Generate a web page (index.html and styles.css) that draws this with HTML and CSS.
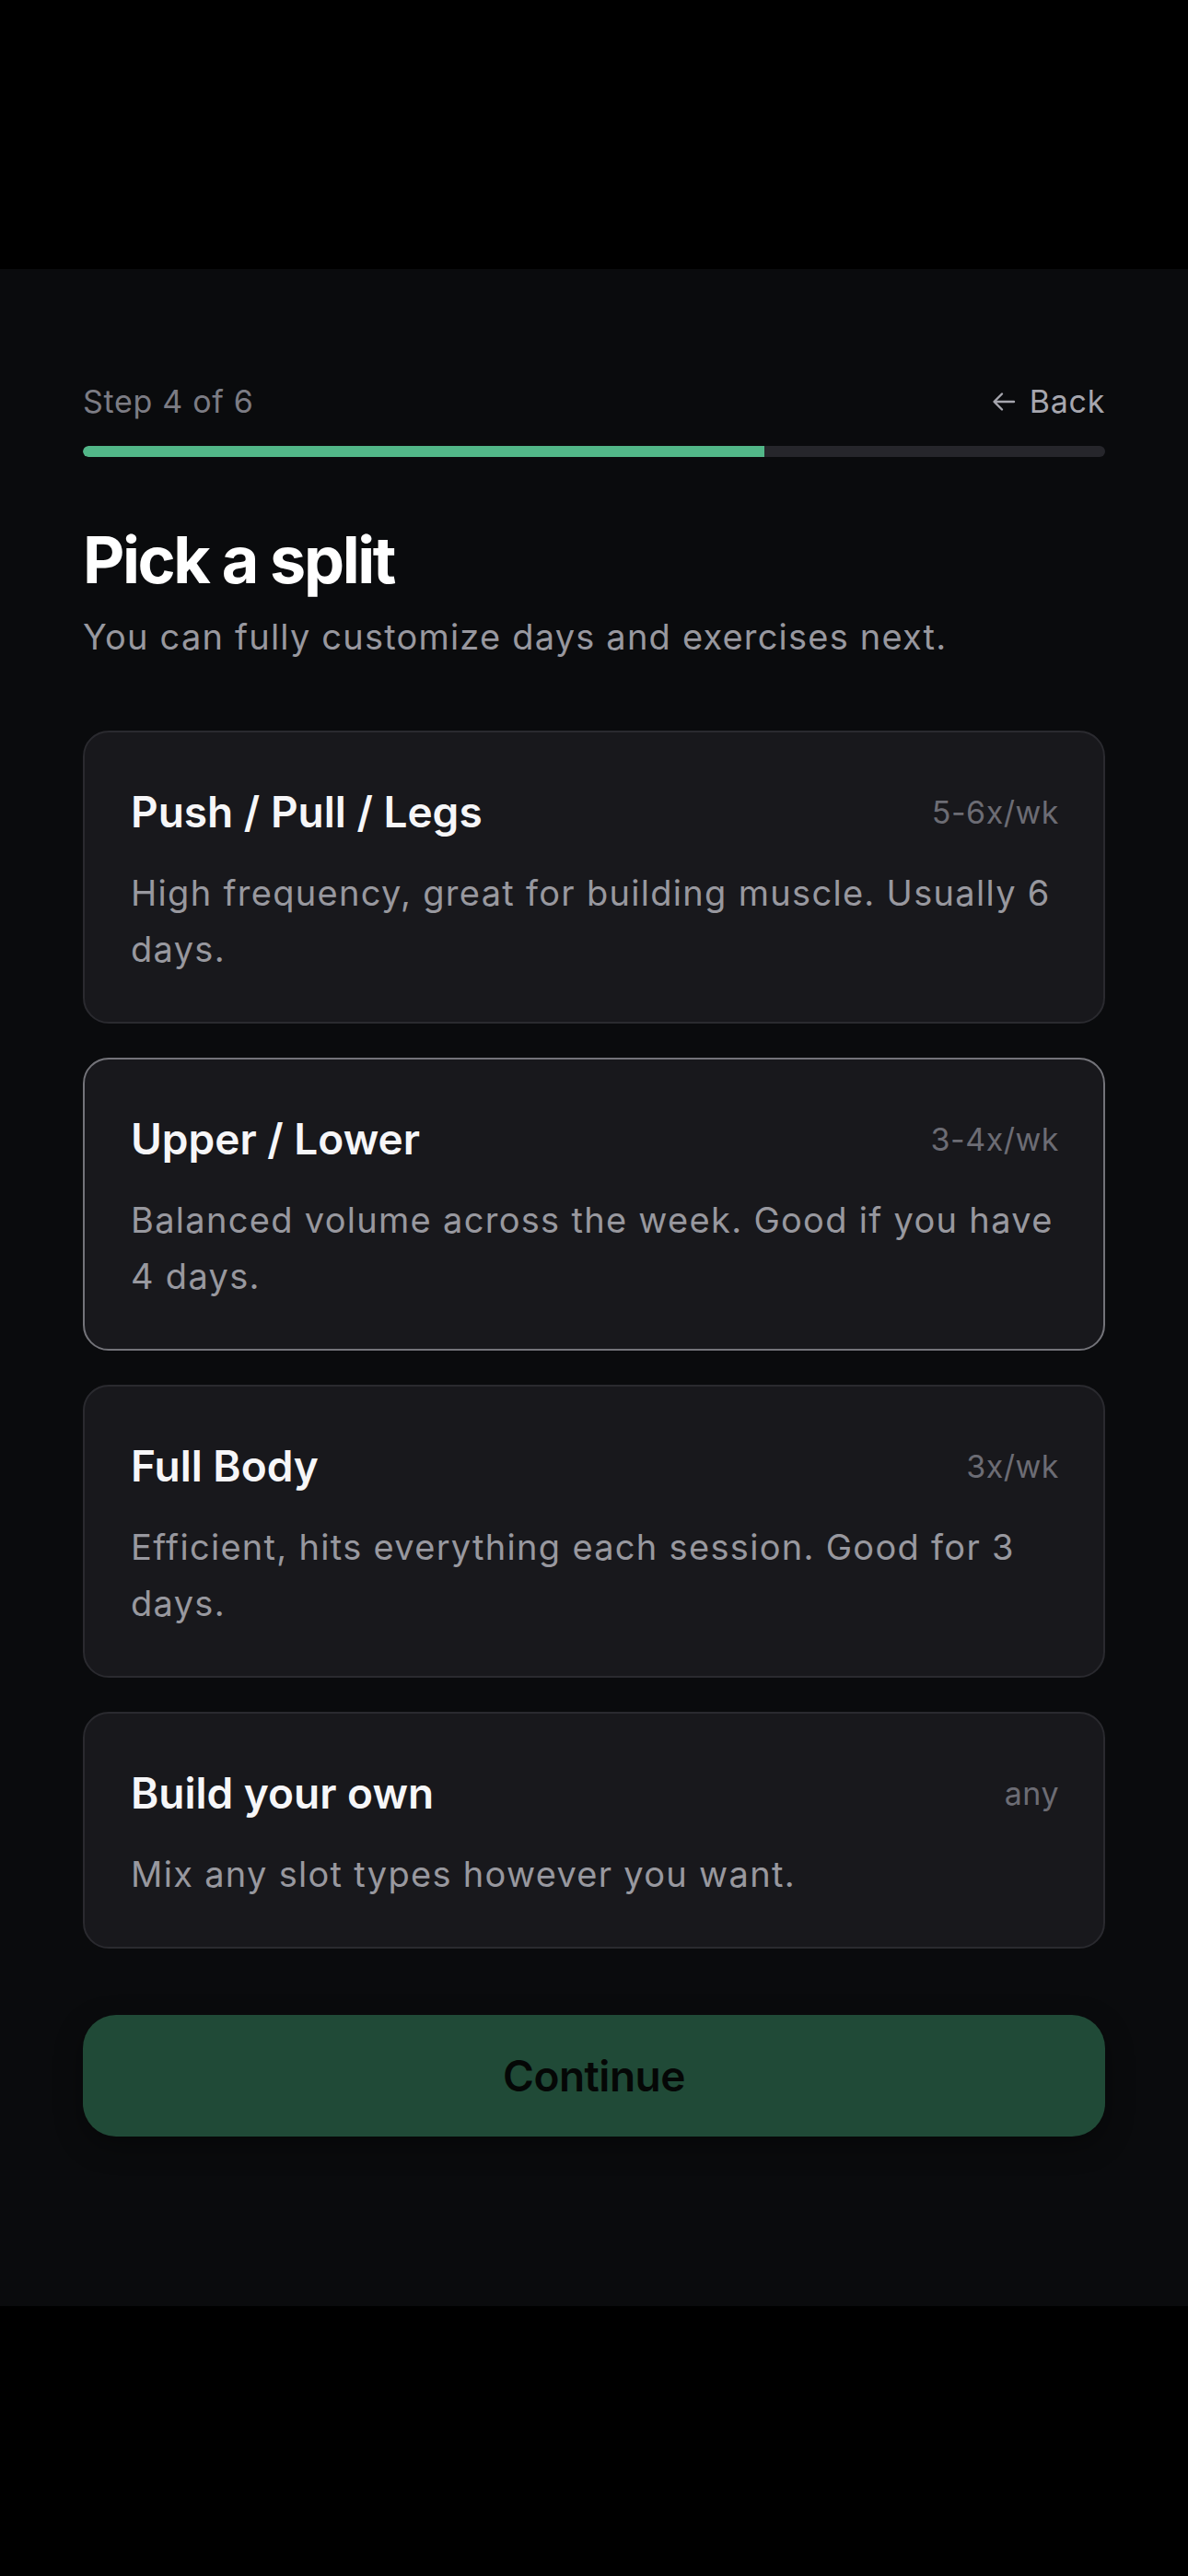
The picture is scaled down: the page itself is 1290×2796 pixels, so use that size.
FILE: index.html
```html
<!DOCTYPE html>
<html lang="en">
<head>
  <meta charset="UTF-8" />
  <meta name="viewport" content="width=device-width, initial-scale=1" />
  <title>Pick a split</title>
  <link rel="stylesheet" href="styles.css">
</head>
<body>
  <div class="screen">
    <div class="topbar">
      <span class="step">Step 4 of 6</span>
      <a class="back" href="#">
        <svg class="back-icon" viewBox="0 0 26 22" width="26" height="22" aria-hidden="true">
          <path d="M24 11H3M11 2.5L2.5 11L11 19.5" fill="none" stroke="currentColor" stroke-width="2.4" stroke-linecap="round" stroke-linejoin="round"/>
        </svg>
        Back
      </a>
    </div>
    <div class="progress"><div class="progress-fill"></div></div>

    <h1>Pick a split</h1>
    <p class="subtitle">You can fully customize days and exercises next.</p>

    <div class="options">
      <div class="option">
        <div class="option-head">
          <span class="option-title">Push / Pull / Legs</span>
          <span class="option-meta">5-6x/wk</span>
        </div>
        <p class="option-desc">High frequency, great for building muscle. Usually 6 days.</p>
      </div>
      <div class="option selected">
        <div class="option-head">
          <span class="option-title">Upper / Lower</span>
          <span class="option-meta">3-4x/wk</span>
        </div>
        <p class="option-desc">Balanced volume across the week. Good if you have 4 days.</p>
      </div>
      <div class="option">
        <div class="option-head">
          <span class="option-title">Full Body</span>
          <span class="option-meta">3x/wk</span>
        </div>
        <p class="option-desc">Efficient, hits everything each session. Good for 3 days.</p>
      </div>
      <div class="option">
        <div class="option-head">
          <span class="option-title">Build your own</span>
          <span class="option-meta">any</span>
        </div>
        <p class="option-desc">Mix any slot types however you want.</p>
      </div>
    </div>

    <button class="continue">Continue</button>
  </div>
</body>
</html>
```

FILE: styles.css
```css
html, body {
  margin: 0;
  background: #000;
  font-family: 'Inter', 'Noto Sans', sans-serif;
  color: #fff;
}
.screen {
  margin-top: 292px;
  height: 2211px;
  box-sizing: border-box;
  background: #0a0b0d;
  padding: 123px 90px 0;
}
.topbar {
  display: flex;
  justify-content: space-between;
  align-items: center;
  height: 41px;
  font-size: 34px;
  line-height: 41px;
  letter-spacing: 0.7px;
}
.step {
  color: #7c7c84;
}
.back {
  display: flex;
  align-items: center;
  gap: 15px;
  color: #a6a6ae;
  text-decoration: none;
}
.back-icon {
  display: block;
}
.progress {
  margin-top: 28px;
  height: 12px;
  border-radius: 6px;
  background: #26262b;
  overflow: hidden;
}
.progress-fill {
  width: 66.67%;
  height: 100%;
  background: #52b788;
  border-radius: 6px 0 0 6px;
}
h1 {
  margin: 70px 0 0;
  font-size: 70px;
  line-height: 84px;
  font-weight: 700;
  letter-spacing: -2.4px;
  color: #fff;
}
.subtitle {
  margin: 17px 0 0;
  font-size: 38px;
  line-height: 49px;
  letter-spacing: 1.2px;
  color: #98989f;
}
.options {
  margin-top: 77px;
  display: flex;
  flex-direction: column;
  gap: 37px;
}
.option {
  background: #18181c;
  border: 2px solid #2a2a2f;
  border-radius: 28px;
  padding: 59px 48px 48px 50px;
}
.option.selected {
  border-color: #737379;
}
.option-head {
  display: flex;
  justify-content: space-between;
  align-items: center;
}
.option-title {
  font-size: 46px;
  line-height: 55px;
  font-weight: 600;
  letter-spacing: 0;
  color: #f6f6f8;
}
.option-meta {
  font-size: 34px;
  line-height: 41px;
  letter-spacing: 0.5px;
  color: #6c6c74;
}
.option-desc {
  margin: 30px 0 0;
  font-size: 38px;
  line-height: 61px;
  letter-spacing: 1.3px;
  color: #98989f;
}
.continue {
  display: block;
  width: 100%;
  margin-top: 72px;
  height: 132px;
  border: none;
  border-radius: 36px;
  background: #204a37;
  color: #050706;
  font-family: inherit;
  font-size: 46px;
  font-weight: 600;
  letter-spacing: -0.5px;
  box-shadow: 0 10px 30px rgba(0, 0, 0, 0.35);
  cursor: pointer;
}
```
